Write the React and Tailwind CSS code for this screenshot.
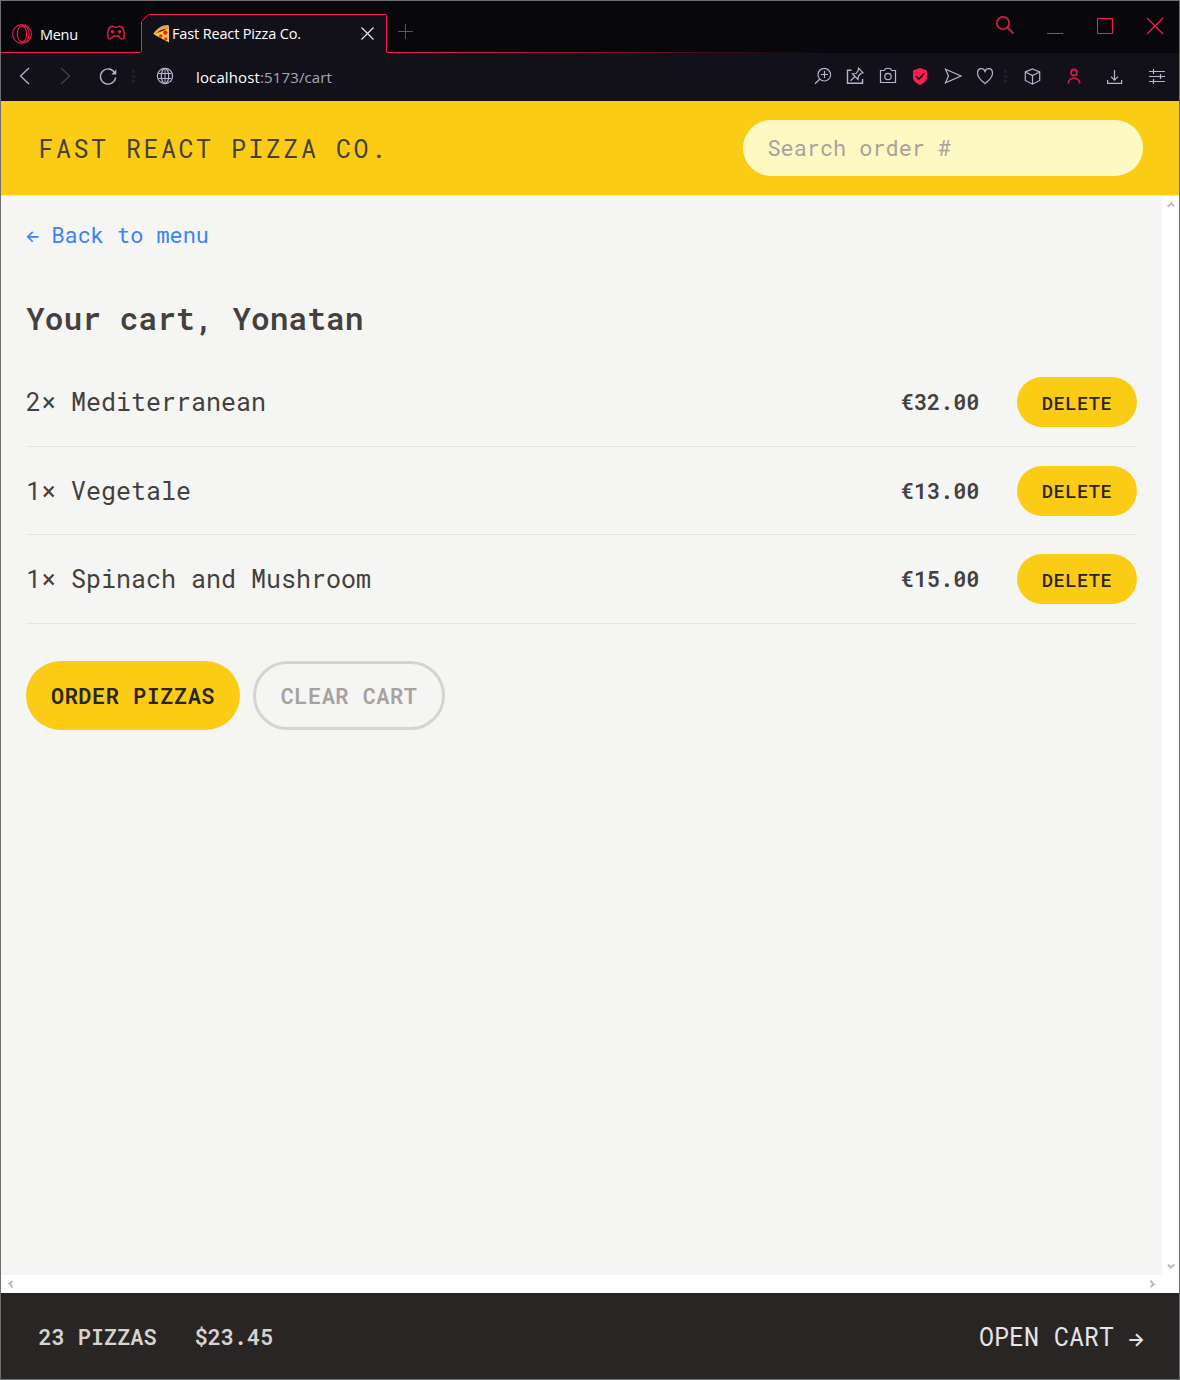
import React from "react";

const RED = "#fa1e4e";
const LILAC = "#b8b3cf";

function Glyph({ className = "", color = LILAC, width = 1.2, children }) {
  return (
    <svg
      viewBox="0 0 24 24"
      className={"h-6 w-6 shrink-0 " + className}
      fill="none"
      stroke={color}
      strokeWidth={width}
    >
      {children}
    </svg>
  );
}

function Dots({ className = "" }) {
  return (
    <div className={"flex w-[3px] shrink-0 flex-col gap-[2px] " + className}>
      <span className="h-[3px] w-[3px] bg-[#211f2c]" />
      <span className="h-[3px] w-[3px] bg-[#211f2c]" />
      <span className="h-[3px] w-[3px] bg-[#211f2c]" />
    </div>
  );
}

function PizzaIcon() {
  return (
    <svg viewBox="0 0 17 20" className="h-5 w-[17px] shrink-0">
      <path d="M1 10.5 16 4v14.5Z" fill="#fdc82f" />
      <path d="M.3 9.7C4.2 4.3 9 1 14.7 1l1.3.8v3.1C10.5 4.3 6 6.6 2.400 11Z" fill="#f2a257" />
      <circle cx="12.3" cy="8.600" r="2.200" fill="#e0243a" />
      <circle cx="7.800" cy="12" r="1.700" fill="#e0243a" />
      <circle cx="12.700" cy="14.800" r="1.600" fill="#e0243a" />
    </svg>
  );
}

function TitleBar() {
  return (
    <div className="relative flex h-[52px] items-start bg-[#08080c]">
      <svg
        viewBox="0 0 1178 52"
        className="absolute left-0 top-0 h-[52px] w-[1178px]"
        fill="none"
      >
        <defs>
          <linearGradient id="fade" gradientUnits="userSpaceOnUse" x1="386" y1="0" x2="820" y2="0">
            <stop offset="0" stopColor={RED} />
            <stop offset="1" stopColor={RED} stopOpacity="0" />
          </linearGradient>
        </defs>
        <path d="M140.500 52V20.500L147 13.500H385L386 14.500V52Z" fill="#12111a" />
        <path d="M0 51.500H139L140.500 50V20.500L147.500 13.500H385L385.500 14.500V51.500" stroke={RED} />
        <rect x="386" y="51" width="434" height="1" fill="url(#fade)" />
      </svg>
      <div className="relative -mt-px flex w-full items-center">
        <Glyph className="ml-[9px] mt-[21px]" color="#e01c48">
          <circle cx="12" cy="12" r="9.400" />
          <ellipse cx="12" cy="12" rx="4.700" ry="7.800" />
          <path d="M10 4.500c7-2.500 9 3 9 7.500s-2 10-9 7.500" />
        </Glyph>
        <span className="ml-[6px] mt-[23px] w-[56px] font-['Open_Sans','Noto_Sans',sans-serif] text-[14.500px] leading-6 tracking-[-0.300px] text-white">
          Menu
        </span>
        <Glyph className="ml-[8px] mt-[19px]" color="#e01c48" width={1.5}>
          <path d="M7.500 5.500c1.500-.8 2.300.8 4.500.8s3-1.600 4.500-.8l2 1c1.300 2 2.500 7.500 1.400 10.200-.9 1.900-2.900 1.500-3.900.2L14.500 15h-5L7.500 16.900c-1 1.300-2.500 1.700-3.400-.2C3 14 4 8.500 5.500 6.500Z" />
          <path d="M8.500 9v3.500M6.700 10.700h3.600" />
          <path d="M15.500 9v3.500M13.700 10.700h3.600" />
        </Glyph>
        <div className="ml-[25px] mt-[21px] flex h-6 w-[226px] items-center">
          <PizzaIcon />
          <span className="ml-[2px] whitespace-nowrap font-['Open_Sans','Noto_Sans',sans-serif] text-[14.500px] tracking-[-0.150px] text-white">
            Fast React Pizza Co.
          </span>
          <Glyph className="ml-auto" color="#e6e5ec">
            <path d="m6.500 5.500 12 12M18.500 5.500l-12 12" />
          </Glyph>
        </div>
        <Glyph className="ml-[15px] mt-[17px]" color="#d11d45" width={1}>
          <path d="M11.500 4v15M4 11.500h15" />
        </Glyph>
        <Glyph className="ml-auto mt-[3px]" color="#d11d45" width={1.800}>
          <circle cx="10" cy="10" r="6.200" />
          <path d="m14.500 14.500 6 6" />
        </Glyph>
        <Glyph className="ml-[26px] mt-[3px]" color={RED} width={1}>
          <path d="M4 20.500h16" />
        </Glyph>
        <Glyph className="ml-[26px] mt-[3px]" color={RED} width={1}>
          <path d="M4.500 5.500h15v15h-15Z" />
        </Glyph>
        <Glyph className="ml-[26px] mr-[12px] mt-[3px]" color={RED}>
          <path d="m4 5 16 16M20 5 4 21" />
        </Glyph>
      </div>
    </div>
  );
}

function AddressBar() {
  return (
    <div className="flex h-[48px] items-center bg-[#12111a] pb-[2px]">
      <Glyph className="ml-[12px]" width={1.300}>
        <path d="m16 4-8.500 8 8.500 8" />
      </Glyph>
      <Glyph className="ml-[16px]" color="#42404f" width={1.300}>
        <path d="m8 4 8.500 8L8 20" />
      </Glyph>
      <Glyph className="ml-[19px]" width={1.400}>
        <path d="M18.800 9A7.600 7.600 0 1 0 19.600 13.500" />
        <path d="M20.300 5.500v5h-5Z" fill={LILAC} stroke="none" />
      </Glyph>
      <Dots className="ml-[12px]" />
      <Glyph className="ml-[18px]">
        <circle cx="12" cy="12" r="7.600" />
        <ellipse cx="12" cy="12" rx="3.700" ry="7.600" />
        <path d="M5.500 9.500h13M5.500 14.500h13M12 4.500v15" strokeWidth="1" />
      </Glyph>
      <div className="ml-[19px] mt-[2px] font-['Open_Sans','Noto_Sans',sans-serif] text-[15px] tracking-[0.130px] text-[#a9a5bd]">
        <span className="text-white">localhost</span>:5173/cart
      </div>
      <Glyph className="ml-auto">
        <circle cx="13.300" cy="10.700" r="6.300" />
        <path d="m8.700 15.200-4.700 4.500M10 10.500h7M13.500 7v7" />
      </Glyph>
      <Glyph className="ml-[8px]">
        <path d="M8.500 6.300h-4v12.900h15V15" strokeWidth="1.400" />
        <path d="m15.500 4.200 4.500 4.500-2.200.8-2.300 2.500-.5 3.500-5.500-5.500 3.500-.5 2-2.500ZM12 12.500l-4.500 4.200" />
      </Glyph>
      <Glyph className="ml-[9px]">
        <path d="M4.500 6.500h3.700l1.300-2h5l1.300 2h3.700v12h-15Z" />
        <circle cx="12" cy="12.500" r="3.200" />
      </Glyph>
      <Glyph className="ml-[8px]" color="none">
        <path d="m12 4 7 2.500v7.500c0 3-4 5.500-7 7-3-1.500-7-4-7-7V6.500Z" fill="#fa1e4e" />
        <path d="m7.800 12 3 3 5.700-5.700" stroke="#12111a" strokeWidth="1.600" />
      </Glyph>
      <Glyph className="ml-[9px]">
        <path d="m4.500 5.200 15.500 6.800-15.500 6.800L7.500 12Z" />
      </Glyph>
      <Glyph className="ml-[8px]">
        <path d="M12 19.500C8 16.500 4.500 13 4.500 9.200c0-5.500 6-6 7.500-1.700 1.500-4.300 7.500-3.800 7.500 1.700 0 3.800-3.500 7.300-7.500 10.300Z" />
      </Glyph>
      <Dots className="ml-[7px]" />
      <Glyph className="ml-[13px]">
        <path d="m12.500 5 7.200 3v8.500l-7.200 3.700-7.200-3.700V8ZM5.300 8l7.200 3.500L19.700 8M12.500 11.500v8.700" />
      </Glyph>
      <Glyph className="ml-[18px]" color="#cc1c44" width={1.800}>
        <circle cx="12" cy="8.500" r="3" />
        <path d="M6.300 19.500c0-7.300 11.400-7.300 11.400 0" />
      </Glyph>
      <Glyph className="ml-[17px]">
        <path d="M11.500 6v10M8 12.700l3.500 3.500 3.500-3.500M4.600 16v3.300h14V16" />
      </Glyph>
      <Glyph className="ml-[18px] mr-[10px]">
        <path d="M4 7.500h16M4 12.500h16M4 17.500h16M8.500 5v5M15.500 10v5M8.500 15v5" />
      </Glyph>
    </div>
  );
}

const items = [
  { qty: 2, name: "Mediterranean", price: "€32.00" },
  { qty: 1, name: "Vegetale", price: "€13.00" },
  { qty: 1, name: "Spinach and Mushroom", price: "€15.00" },
];

function CartItem({ item }) {
  return (
    <li className="flex h-[88.500px] items-center border-b border-[#e7e5e4] pt-px">
      <p className="mb-[0.800px] text-[25px]">
        {item.qty}× {item.name}
      </p>
      <p className="ml-auto mt-[0.600px] text-[21.875px] font-semibold">{item.price}</p>
      <button className="ml-[37.500px] h-[50px] w-[120px] rounded-full bg-[#facc15] pt-px text-[18.750px] font-medium tracking-[0.025em] text-[#292524]">
        DELETE
      </button>
    </li>
  );
}

function ScrollArrow({ className = "" }) {
  return (
    <svg viewBox="0 0 8 8" className={"h-2 w-2 " + className} fill="none" stroke="#b9b9b9" strokeWidth="2">
      <path d="M.5 6.500 2.500 5 4.500 3.700 7 6.300" />
      <path d="M4.500 4V1.500" strokeWidth="1" />
    </svg>
  );
}

export default function App() {
  return (
    <div className="flex h-[1380px] w-[1180px] flex-col overflow-hidden border border-[#6f6f6f] bg-white font-['Roboto_Mono','DejaVu_Sans_Mono',monospace] text-[#44403c]">
      <TitleBar />
      <AddressBar />
      <header className="flex h-[94px] shrink-0 items-center justify-between bg-[#facc15] pl-[37.500px] pr-[36px]">
        <h1 className="mt-px text-[25px] tracking-[0.1em]">FAST REACT PIZZA CO.</h1>
        <input
          placeholder="Search order #"
          className="h-[56px] w-[400px] rounded-full bg-[#fef9c3] pb-[2px] pl-[24.500px] pr-[25px] text-[21.875px] placeholder:text-[#a8a29e]"
        />
      </header>
      <div className="flex min-h-0 flex-1">
        <main className="flex-1 border-t border-[#e7e5e4] bg-[#f5f5f4] pl-[25px] pr-[25px]">
          <a className="mt-[23px] flex items-center text-[21.875px] leading-[32px] text-[#3b82f6]">
            <span className="mt-[3px] w-[13px] -indent-px font-['Inter',sans-serif] text-[16px] font-semibold leading-[29px]">←</span>
            <span className="ml-[12.500px]">Back to menu</span>
          </a>
          <h2 className="mt-[45px] text-[31.250px] font-semibold leading-[44px]">
            Your cart, Yonatan
          </h2>
          <ul className="mt-[18px]">
            {items.map((item) => (
              <CartItem key={item.name} item={item} />
            ))}
          </ul>
          <div className="mt-[37px] flex gap-[13px] text-[21.875px] font-semibold tracking-[0.025em]">
            <button className="h-[69px] w-[214px] rounded-full bg-[#facc15] pt-[2px] text-[#292524]">
              ORDER PIZZAS
            </button>
            <button className="h-[69px] w-[192px] rounded-full border-[3px] border-[#d6d3d1] pt-[2px] text-[#a8a29e]">
              CLEAR CART
            </button>
          </div>
        </main>
        <div className="flex w-[17px] flex-col items-center justify-between border-t border-[#e7e5e4] bg-white pb-1 pt-1">
          <ScrollArrow />
          <ScrollArrow className="rotate-180" />
        </div>
      </div>
      <div className="flex h-[18px] shrink-0 items-center justify-between bg-white pl-[5px] pr-[22px]">
        <ScrollArrow className="-rotate-90" />
        <ScrollArrow className="rotate-90" />
      </div>
      <footer className="flex h-[86px] shrink-0 items-center bg-[#292524] pl-[37.500px] pr-[35px] pt-[2px]">
        <p className="flex gap-[38px] text-[21.875px] font-semibold text-[#d6d3d1]">
          <span>23 PIZZAS</span>
          <span>$23.45</span>
        </p>
        <a className="ml-auto flex items-center text-[25px] text-[#e7e5e4]">
          <span>OPEN CART</span>
          <span className="ml-[13px] mt-[4px] w-[17px] font-['Inter',sans-serif] text-[19px] font-semibold leading-[29px]">→</span>
        </a>
      </footer>
    </div>
  );
}
